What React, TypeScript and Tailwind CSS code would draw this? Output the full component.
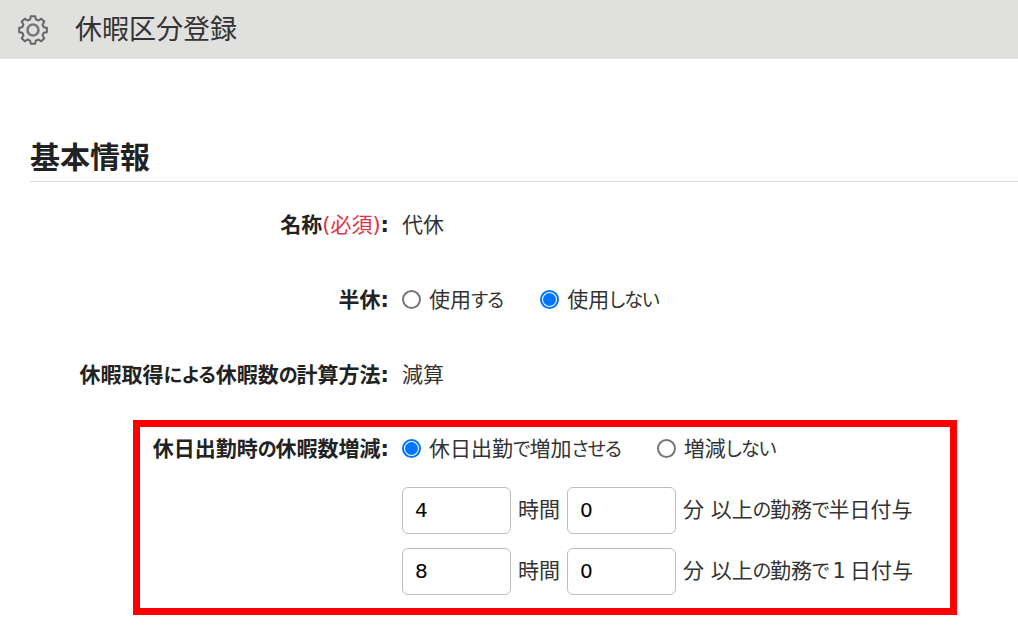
import React from 'react';

const FONT = "font-['DejaVu_Sans','Noto_Sans_CJK_JP',sans-serif]";

// eight-tooth cog outline, built from polar points
function gearPoints() {
    const pts: string[] = [];
    for (let i = 0; i < 8; i++) {
        const a = i * 45 - 90;
        for (const [d, r] of [[-15, 11], [-9, 14], [9, 14], [15, 11]]) {
            const t = ((a + d) * Math.PI) / 180;
            pts.push(`${(16 + r * Math.cos(t)).toFixed(2)},${(16 + r * Math.sin(t)).toFixed(2)}`);
        }
    }
    return pts.join(' ');
}

function Gear() {
    return (
        <svg width="32" height="32" viewBox="0 0 32 32" fill="none" stroke="#666" className="shrink-0">
            <polygon points={gearPoints()} strokeWidth="2" strokeLinejoin="round" />
            <circle cx="16" cy="16" r="5.5" strokeWidth="2.6" stroke="#777" />
        </svg>
    );
}

// kana in the reference font run narrower than the kanji
function K({ children }: { children: React.ReactNode }) {
    return <span className="text-[19px] tracking-[-1px]">{children}</span>;
}

function Radio({ checked, label, className = '' }: { checked?: boolean; label: React.ReactNode; className?: string }) {
    return (
        <label className={`flex items-center ${className}`}>
            {checked ? (
                <span className="w-[19px] h-[19px] mb-[2px] rounded-full border-[2px] border-[#0075ff] bg-white flex items-center justify-center">
                    <span className="w-[13px] h-[13px] rounded-full bg-[#0075ff]" />
                </span>
            ) : (
                <span className="w-[19px] h-[19px] mb-[2px] rounded-full border-[2px] border-[#767676] bg-white" />
            )}
            <span className="ml-[8px]">{label}</span>
        </label>
    );
}

function Row({ label, children, className = '' }: { label: React.ReactNode; children: React.ReactNode; className?: string }) {
    return (
        <div className={`flex items-center h-[27px] ${className}`}>
            <div className="w-[389px] text-right font-bold whitespace-nowrap text-[#222]">{label}</div>
            <div className="ml-[13px] flex items-center">{children}</div>
        </div>
    );
}

function TimeRow({ hours, suffix, className = '' }: { hours: string; suffix: React.ReactNode; className?: string }) {
    return (
        <div className={`flex items-center ml-[262px] ${className}`}>
            <div className="w-[109px] h-[47px] border border-[#bdbdbd] rounded-[6px] pl-[12px] flex items-center text-[20px] text-black">{hours}</div>
            <span className="ml-[7px] w-[49px]">時間</span>
            <div className="w-[109px] h-[47px] border border-[#bdbdbd] rounded-[6px] pl-[12px] flex items-center text-[20px] text-black">0</div>
            <span className="ml-[7px] whitespace-pre">{suffix}</span>
        </div>
    );
}

export default function App() {
    return (
        <div className={`w-[1018px] h-[630px] overflow-hidden bg-white text-[21px] leading-[27px] text-[#333] [font-feature-settings:'palt'] ${FONT}`}>
            <header className="h-[59px] bg-[#e0e0de] flex items-center pl-[17px]">
                <Gear />
                <h1 className="ml-[26px] text-[27px] leading-[32px] text-[#333]">休暇区分登録</h1>
            </header>
            <section className="pl-[30px] pt-[79px]">
                <h2 className="text-[30px] leading-[40px] font-bold text-[#222] h-[43px] border-b border-[#dcdcdc] box-content">基本情報</h2>
            </section>
            <div className="pt-[30px]">
                <Row label={<>名称<span className="font-normal text-[#dc3545]">(必須)</span>:</>}>代休</Row>
                <Row label="半休:" className="mt-[48px]">
                    <Radio label={<>使用<K>する</K></>} />
                    <Radio checked label={<>使用<K>しない</K></>} className="ml-[37px]" />
                </Row>
                <Row label={<>休暇取得<span className="text-[19px]">による</span>休暇数<K>の</K>計算方法:</>} className="mt-[48px]">減算</Row>
            </div>
            <div className="mt-[31px] ml-[133px] w-[824px] h-[195px] border-[7px] border-[#ff0000] pt-[9px]">
                <div className="flex items-center h-[27px]">
                    <div className="w-[249px] text-right font-bold whitespace-nowrap text-[#222]">休日出勤時<K>の</K>休暇数増減:</div>
                    <div className="ml-[13px] flex items-center">
                        <Radio checked label={<>休日出勤<K>で</K>増加<K>させる</K></>} />
                        <Radio label={<>増減<K>しない</K></>} className="ml-[36px]" />
                    </div>
                </div>
                <TimeRow hours="4" className="mt-[24px]" suffix={<>分 以上<K>の</K>勤務<K>で</K>半日付与</>} />
                <TimeRow hours="8" className="mt-[14px]" suffix={<>分 以上<K>の</K>勤務<K>で</K><span className="mx-[4px]">1</span>日付与</>} />
            </div>
        </div>
    );
}
